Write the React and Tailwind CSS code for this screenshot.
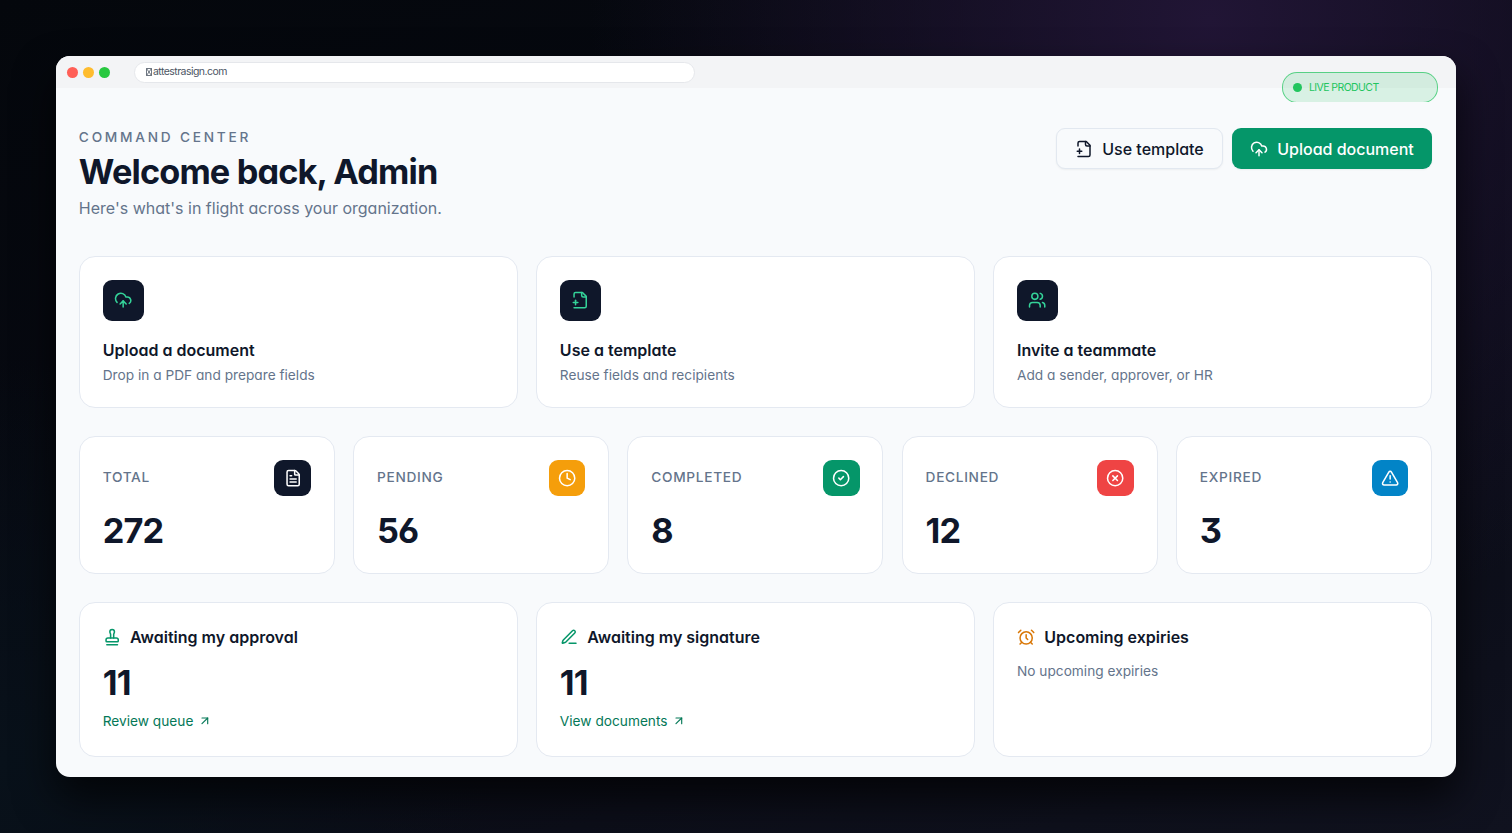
import {
  AlarmClock,
  ArrowUpRight,
  CircleCheck,
  CircleX,
  Clock,
  CloudUpload,
  FileText,
  Stamp,
  TriangleAlert,
  Users,
} from 'lucide-react'

function LineIcon({ className, children }) {
  return (
    <svg
      viewBox="0 0 24 24"
      fill="none"
      stroke="currentColor"
      strokeWidth="2"
      strokeLinecap="round"
      strokeLinejoin="round"
      className={className}
    >
      {children}
    </svg>
  )
}

// page with a folded corner and a small plus on its open left side
function FilePlusCorner({ className }) {
  return (
    <LineIcon className={className}>
      <path d="M4 22h14a2 2 0 0 0 2-2V7l-5-5H6a2 2 0 0 0-2 2v4" />
      <path d="M14 2v4a2 2 0 0 0 2 2h4" />
      <path d="M3 15h6" />
      <path d="M6 12v6" />
    </LineIcon>
  )
}

function SignPen({ className }) {
  return (
    <LineIcon className={className}>
      <path d="M12 20h9" />
      <path d="M16.376 3.622a1 1 0 0 1 3.002 3.002L7.368 18.635a2 2 0 0 1-.855.506l-2.872.838a.5.5 0 0 1-.62-.62l.838-2.872a2 2 0 0 1 .506-.854z" />
    </LineIcon>
  )
}

const actions = [
  { title: 'Upload a document', text: 'Drop in a PDF and prepare fields', icon: CloudUpload },
  { title: 'Use a template', text: 'Reuse fields and recipients', icon: FilePlusCorner },
  { title: 'Invite a teammate', text: 'Add a sender, approver, or HR', icon: Users },
]

const stats = [
  { label: 'Total', value: 272, icon: FileText, color: 'bg-[#0f172a]' },
  { label: 'Pending', value: 56, icon: Clock, color: 'bg-[#f59e0b]' },
  { label: 'Completed', value: 8, icon: CircleCheck, color: 'bg-[#059669]' },
  { label: 'Declined', value: 12, icon: CircleX, color: 'bg-[#ef4444]' },
  { label: 'Expired', value: 3, icon: TriangleAlert, color: 'bg-[#0284c7]' },
]

const queues = [
  { title: 'Awaiting my approval', icon: Stamp, color: 'text-[#059669]', count: 11, link: 'Review queue' },
  { title: 'Awaiting my signature', icon: SignPen, color: 'text-[#059669]', count: 11, link: 'View documents' },
  { title: 'Upcoming expiries', icon: AlarmClock, color: 'text-[#d97706]', empty: 'No upcoming expiries' },
]

const card = 'rounded-[16px] border border-[#e4e9f1] bg-white px-[22.86px] pt-[22.5px]'

function TitleBar() {
  return (
    <div className="flex h-8 items-center bg-[#f3f4f6] pl-[11px]">
      <div className="flex gap-[5px]">
        <span className="size-[11px] rounded-full bg-[#ff5f57]" />
        <span className="size-[11px] rounded-full bg-[#febc2e]" />
        <span className="size-[11px] rounded-full bg-[#28c840]" />
      </div>
      <div className="ml-[24px] flex h-[21px] w-[561px] items-center rounded-full border border-[#e5e7eb] bg-white pl-[11px] text-[10.5px] text-[#4b5563] [font-feature-settings:normal]">
        <svg
          viewBox="0 0 6 8"
          className="mr-[1px] -mt-px h-[8px] w-[6px] shrink-0"
          fill="none"
          stroke="currentColor"
          strokeWidth="0.8"
        >
          <path d="M.5 .5h5v7h-5zM.5 .5l5 7M5.5 .5l-5 7" />
        </svg>
        <span className="-mt-px tracking-[-0.55px]">attestrasign.com</span>
      </div>
    </div>
  )
}

function LiveBadge() {
  return (
    <div className="absolute top-4 right-[18px] h-[30px] w-[156px] overflow-hidden">
      <div className="flex h-[31px] items-center gap-[7px] rounded-[15px] border border-[#22c55e]/70 bg-[#22c55e]/15 pl-[10px] text-[10.5px] text-[#22c55e]">
        <span className="size-[9px] rounded-full bg-[#22c55e]" />
        <span className="tracking-[-0.58px]">LIVE PRODUCT</span>
      </div>
    </div>
  )
}

export default function App() {
  return (
    <div className="h-[833px] w-[1512px] overflow-hidden bg-[radial-gradient(ellipse_620px_620px_at_1210px_20px,#211535,transparent),radial-gradient(ellipse_500px_400px_at_0px_760px,#08111a,transparent),linear-gradient(160deg,#04070c_0%,#080a13_50%,#10121f_100%)] p-14 font-[Inter,sans-serif] text-[#0f172a] [font-feature-settings:'cv02','cv03','cv04','cv09','cv11']">
      <div className="relative h-[721px] w-[1400px] overflow-hidden rounded-[14px] bg-[#f8fafc] shadow-[0_20px_40px_rgba(0,0,0,0.7)]">
        <TitleBar />
        <LiveBadge />

        <main className="pt-10 pr-6 pl-[22.86px]">
          <header className="flex h-[128px] items-start justify-between">
            <div>
              <p className="text-[13.7px] leading-[18px] font-medium tracking-[2.74px] text-[#64748b] uppercase">
                Command center
              </p>
              <h1 className="mt-[5px] text-[34.3px] leading-[41px] font-bold tracking-[-0.86px]">Welcome back, Admin</h1>
              <p className="mt-[5px] text-[16px] leading-[23px] text-[#64748b]">
                Here's what's in flight across your organization.
              </p>
            </div>
            <div className="flex gap-[9px]">
              <button className="flex h-[41px] w-[167px] items-center justify-center gap-[9px] rounded-[9px] border border-[#e2e8f0] bg-[#f8fafc] text-[16px] font-medium shadow-xs">
                <FilePlusCorner className="size-[18px]" />
                Use template
              </button>
              <button className="flex h-[41px] w-[200px] items-center justify-center gap-[9px] rounded-[9px] bg-[#059669] text-[16px] font-medium text-white shadow-xs">
                <CloudUpload className="size-[18px]" />
                Upload document
              </button>
            </div>
          </header>

          <section className="grid grid-cols-3 gap-[18.3px]">
            {actions.map(({ title, text, icon: Icon }) => (
              <div key={title} className={`${card} h-[152px]`}>
                <div className="flex size-[41.1px] items-center justify-center rounded-[9px] bg-[#0f172a] text-[#34d399]">
                  <Icon className="size-[18.3px]" />
                </div>
                <h2 className="mt-[18.9px] text-[16px] leading-[23px] font-semibold">{title}</h2>
                <p className="mt-[3.5px] text-[13.7px] leading-[18px] text-[#64748b]">{text}</p>
              </div>
            ))}
          </section>

          <section className="mt-7 grid grid-cols-5 gap-[18.3px]">
            {stats.map(({ label, value, icon: Icon, color }) => (
              <div key={label} className={`${card} h-[138px]`}>
                <div className="flex items-center justify-between">
                  <span className="pb-[1.5px] text-[13.7px] font-medium tracking-[0.68px] text-[#64748b] uppercase">
                    {label}
                  </span>
                  <div className={`flex size-[36.6px] items-center justify-center rounded-[9px] text-white ${color}`}>
                    <Icon className="size-[18.3px]" />
                  </div>
                </div>
                <p className="mt-[13.9px] text-[34.3px] leading-[41px] font-bold tracking-[-0.86px]">{value}</p>
              </div>
            ))}
          </section>

          <section className="mt-7 grid grid-cols-3 gap-[18.3px]">
            {queues.map(({ title, icon: Icon, color, count, link, empty }) => (
              <div key={title} className={`${card} h-[155px]`}>
                <div className="flex items-center gap-[9px]">
                  <Icon className={`size-[18.3px] ${color}`} />
                  <h2 className="text-[16px] leading-[23px] font-semibold">{title}</h2>
                </div>
                {empty ? (
                  <p className="mt-[12.5px] text-[13.7px] leading-[20px] text-[#64748b]">{empty}</p>
                ) : (
                  <>
                    <p className="mt-[13.5px] text-[34.3px] leading-[41px] font-bold tracking-[-0.86px]">{count}</p>
                    <a className="mt-[8px] flex items-center gap-[4.5px] text-[13.7px] leading-[20px] text-[#047857]">
                      {link}
                      <ArrowUpRight className="size-[13.7px]" />
                    </a>
                  </>
                )}
              </div>
            ))}
          </section>
        </main>
      </div>
    </div>
  )
}
